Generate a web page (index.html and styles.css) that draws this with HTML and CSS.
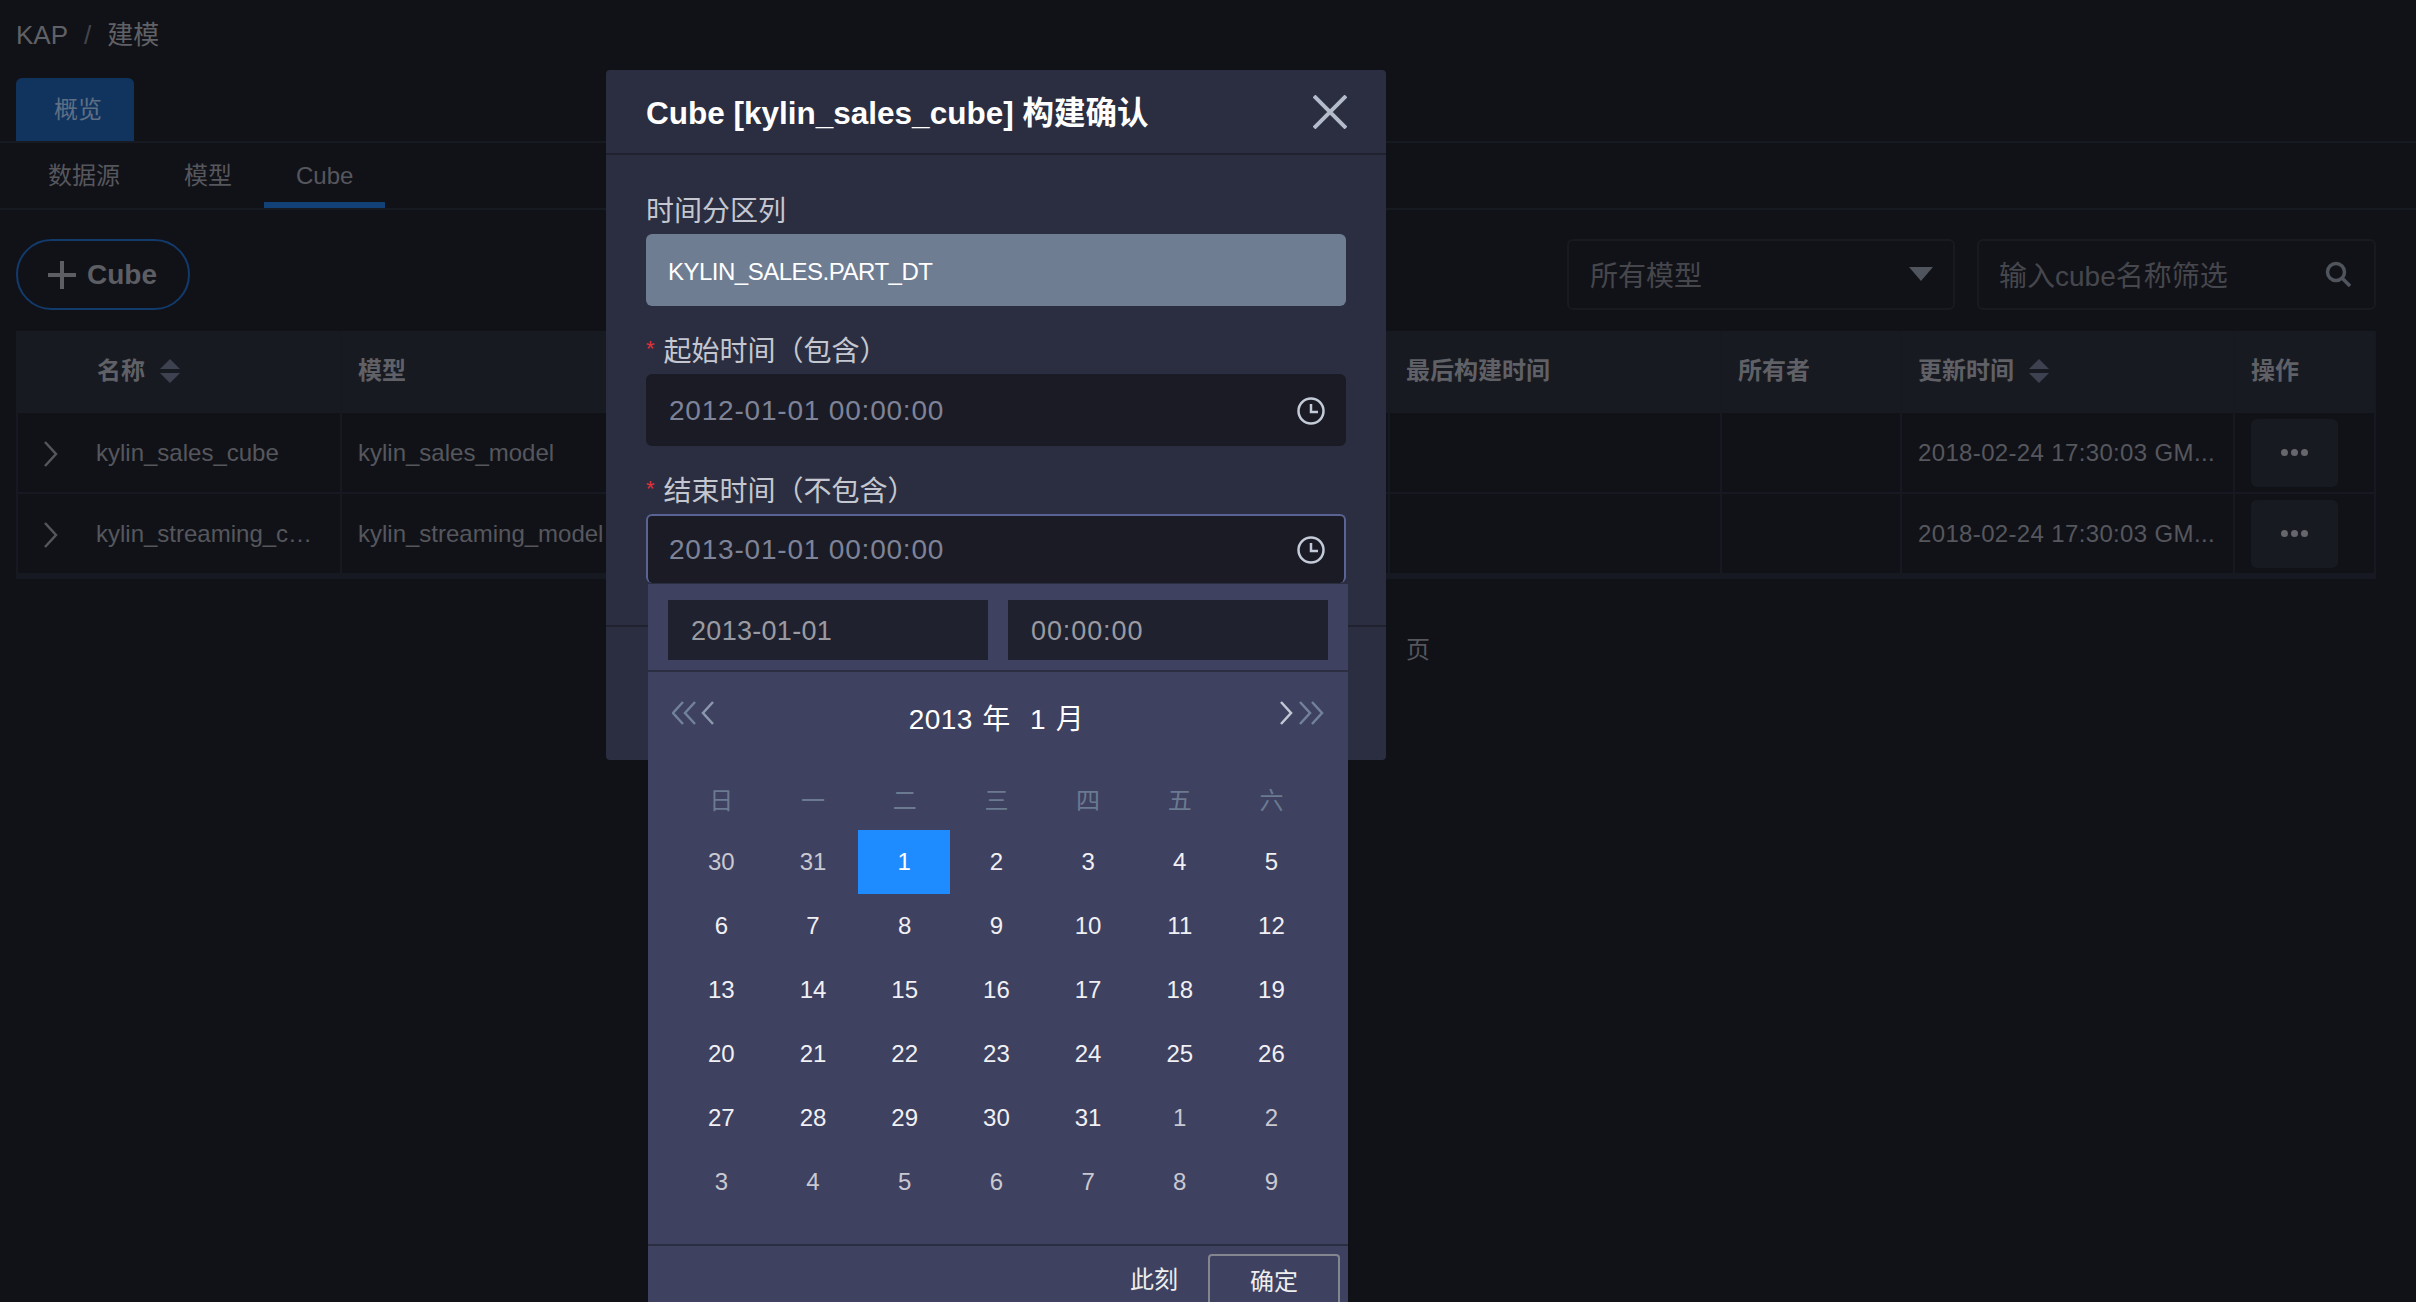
FILE: index.html
```html
<!DOCTYPE html>
<html lang="zh-CN">
<head>
  <meta charset="UTF-8" />
  <title>KAP 建模</title>
  <link rel="stylesheet" href="styles.css">
</head>
<body>
  <div class="page">
    <div class="breadcrumb"><span>KAP</span><span class="crumb-sep">/</span><span>建模</span></div>
    <div class="top-tabs"><div class="top-tab">概览</div></div>
    <div class="sub-tabs">
      <div class="sub-tab">数据源</div>
      <div class="sub-tab">模型</div>
      <div class="sub-tab active">Cube</div>
    </div>
    <div class="toolbar">
      <button class="add-btn">
        <svg width="28" height="28" viewBox="0 0 28 28"><path d="M14 0v28M0 14h28" stroke="#5d5e63" stroke-width="4"/></svg>
        Cube
      </button>
      <div class="filters">
        <div class="select-box">所有模型<svg width="24" height="14" viewBox="0 0 24 14"><path d="M0 0h24L12 14z" fill="#50545c"/></svg></div>
        <div class="search-box">输入cube名称筛选<svg width="28" height="28" viewBox="0 0 28 28" fill="none" stroke="#50545c" stroke-width="3.5"><circle cx="12" cy="12" r="8.5"/><path d="M18 18l8 8"/></svg></div>
      </div>
    </div>

    <div class="table">
      <div class="cell head name-col">名称<svg class="sort" width="20" height="24" viewBox="0 0 20 24"><path d="M10 0l10 10H0zM0 14h20L10 24z" fill="#3e4250"/></svg></div>
      <div class="cell head">模型</div>
      <div class="cell head"></div>
      <div class="cell head">最后构建时间</div>
      <div class="cell head">所有者</div>
      <div class="cell head">更新时间<svg class="sort" width="20" height="24" viewBox="0 0 20 24"><path d="M10 0l10 10H0zM0 14h20L10 24z" fill="#3e4250"/></svg></div>
      <div class="cell head">操作</div>

      <div class="cell name-col"><svg class="chevron" width="14" height="26" viewBox="0 0 14 26" fill="none" stroke="#55565c" stroke-width="2.5"><path d="M1 1l11 12L1 25"/></svg>kylin_sales_cube</div>
      <div class="cell">kylin_sales_model</div>
      <div class="cell"></div>
      <div class="cell"></div>
      <div class="cell"></div>
      <div class="cell date">2018-02-24 17:30:03 GM...</div>
      <div class="cell"><div class="more"><i></i><i></i><i></i></div></div>

      <div class="cell name-col"><svg class="chevron" width="14" height="26" viewBox="0 0 14 26" fill="none" stroke="#55565c" stroke-width="2.5"><path d="M1 1l11 12L1 25"/></svg>kylin_streaming_c…</div>
      <div class="cell">kylin_streaming_model</div>
      <div class="cell"></div>
      <div class="cell"></div>
      <div class="cell"></div>
      <div class="cell date">2018-02-24 17:30:03 GM...</div>
      <div class="cell"><div class="more"><i></i><i></i><i></i></div></div>
    </div>
    <div class="pager">页</div>
  </div>

  <div class="modal">
    <div class="modal-head">
      <span>Cube [kylin_sales_cube] 构建确认</span>
      <svg width="34" height="34" viewBox="0 0 34 34" stroke="#b4bccb" stroke-width="4"><path d="M1 1l32 32M33 1L1 33"/></svg>
    </div>
    <div class="modal-body">
      <div class="label label-first">时间分区列</div>
      <div class="input disabled">KYLIN_SALES.PART_DT</div>
      <div class="label"><em>*</em>起始时间（包含）</div>
      <div class="input">2012-01-01 00:00:00
        <svg class="clock" width="28" height="28" viewBox="0 0 28 28" fill="none" stroke="#c4cbd8" stroke-width="2.5"><circle cx="14" cy="14" r="12.5"/><path d="M14 7v8h7"/></svg>
      </div>
      <div class="label"><em>*</em>结束时间（不包含）</div>
      <div class="input focused">2013-01-01 00:00:00
        <svg class="clock" width="28" height="28" viewBox="0 0 28 28" fill="none" stroke="#c4cbd8" stroke-width="2.5"><circle cx="14" cy="14" r="12.5"/><path d="M14 7v8h7"/></svg>
      </div>
    </div>
    <div class="modal-foot"></div>

    <div class="picker">
      <div class="picker-inputs">
        <div class="picker-input">2013-01-01</div>
        <div class="picker-input time">00:00:00</div>
      </div>
      <div class="picker-head">
        <svg width="42" height="24" viewBox="0 0 42 24" fill="none" stroke="#71829b" stroke-width="2.5"><path d="M11 1L1 12l10 11M23 1L13 12l10 11"/><path d="M41 1L31 12l10 11" stroke="#8b98ad"/></svg>
        <span class="picker-title">2013 年&nbsp;&nbsp;1 月</span>
        <svg width="44" height="24" viewBox="0 0 44 24" fill="none" stroke="#71829b" stroke-width="2.5"><path d="M1 1l10 11L1 23" stroke="#c2c9d5"/><path d="M20 1l10 11-10 11M32 1l10 11-10 11"/></svg>
      </div>
      <div class="days">
        <span class="wd">日</span><span class="wd">一</span><span class="wd">二</span><span class="wd">三</span><span class="wd">四</span><span class="wd">五</span><span class="wd">六</span>
        <span class="off">30</span><span class="off">31</span><span class="sel">1</span><span>2</span><span>3</span><span>4</span><span>5</span>
        <span>6</span><span>7</span><span>8</span><span>9</span><span>10</span><span>11</span><span>12</span>
        <span>13</span><span>14</span><span>15</span><span>16</span><span>17</span><span>18</span><span>19</span>
        <span>20</span><span>21</span><span>22</span><span>23</span><span>24</span><span>25</span><span>26</span>
        <span>27</span><span>28</span><span>29</span><span>30</span><span>31</span><span class="off">1</span><span class="off">2</span>
        <span class="off">3</span><span class="off">4</span><span class="off">5</span><span class="off">6</span><span class="off">7</span><span class="off">8</span><span class="off">9</span>
      </div>
      <div class="picker-foot">
        <span class="now">此刻</span>
        <button class="ok">确定</button>
      </div>
    </div>
  </div>
</body>
</html>
```

FILE: styles.css
```css
* {
  box-sizing: border-box;
}
html, body {
  height: 1302px;
  overflow: hidden;
}
body {
  margin: 0;
  background: #111218;
  color: #56575d;
  font-family: "Liberation Sans", "Noto Sans CJK SC", sans-serif;
  font-size: 24px;
}

/* page behind the dialog */
.breadcrumb {
  height: 78px;
  padding: 16px 0 0 16px;
  font-size: 26px;
  line-height: 38px;
  color: #606166;
}
.crumb-sep {
  margin: 0 16px;
  color: #44454b;
}
.top-tabs {
  height: 65px;
  padding-left: 16px;
  border-bottom: 2px solid #181a21;
}
.top-tab {
  width: 118px;
  height: 63px;
  padding-left: 6px;
  background: #11345f;
  border-radius: 6px 6px 0 0;
  text-align: center;
  line-height: 64px;
  color: #5f6f84;
}
.sub-tabs {
  display: flex;
  height: 67px;
  padding-left: 16px;
  border-bottom: 2px solid #181a21;
}
.sub-tab {
  padding: 0 32px;
  height: 65px;
  line-height: 66px;
  color: #56575d;
}
.sub-tab.active {
  border-bottom: 6px solid #114177;
}
.toolbar {
  display: flex;
  justify-content: space-between;
  padding: 29px 40px 0 16px;
  height: 121px;
}
.add-btn {
  display: flex;
  align-items: center;
  gap: 11px;
  width: 174px;
  height: 71px;
  padding: 0 0 0 30px;
  border: 2px solid #123a6b;
  border-radius: 36px;
  background: none;
  color: #5d5e63;
  font: bold 28px "Liberation Sans", sans-serif;
}
.filters {
  display: flex;
  gap: 22px;
}
.select-box, .search-box {
  display: flex;
  align-items: center;
  justify-content: space-between;
  height: 71px;
  padding: 0 20px 2px;
  border: 2px solid #181a21;
  border-radius: 6px;
  font-size: 28px;
  color: #46474d;
}
.select-box {
  width: 388px;
  margin-left: -2px;
  padding-left: 21px;
}
.search-box {
  width: 399px;
  padding-right: 22px;
}

.table {
  display: grid;
  grid-template-columns: 326px 370px 678px 332px 180px 333px 141px;
  grid-template-rows: 82px 81px 81px;
  margin-left: 16px;
  width: 2360px;
  border-bottom: 4px solid #171922;
}
.cell {
  display: flex;
  align-items: center;
  padding-left: 16px;
  border-right: 2px solid #171922;
  border-bottom: 2px solid #171922;
  white-space: nowrap;
  overflow: hidden;
}
.head {
  padding-bottom: 8px;
  background: #181a22;
  font-weight: bold;
  color: #606166;
  border-bottom: none;
}
.name-col {
  position: relative;
  padding-left: 78px;
  border-left: 2px solid #171922;
}
.head.name-col {
  padding-left: 81px;
  border-left: none;
}
.chevron {
  position: absolute;
  left: 26px;
  top: 28px;
}
.sort {
  margin-left: 15px;
  margin-top: 5px;
}
.date {
  letter-spacing: 0.35px;
}
.more {
  display: flex;
  align-items: center;
  justify-content: center;
  gap: 3px;
  width: 87px;
  height: 68px;
  background: #181a22;
  border-radius: 6px;
}
.more i {
  width: 7px;
  height: 7px;
  border-radius: 50%;
  background: #66676c;
}
.pager {
  margin: 51px 0 0 1406px;
}

/* dialog */
.modal {
  position: absolute;
  left: 606px;
  top: 70px;
  width: 780px;
  height: 690px;
  background: #2b2e40;
  border-radius: 4px;
}
.modal-head {
  display: flex;
  align-items: center;
  justify-content: space-between;
  height: 85px;
  padding: 0 39px 0 40px;
  border-bottom: 2px solid #202230;
  color: #fff;
  font-size: 31.5px;
  font-weight: bold;
}
.modal-head span {
  margin-top: -4px;
}
.modal-body {
  height: 472px;
  padding: 0 40px;
  border-bottom: 2px solid #202230;
}
.label {
  height: 68px;
  padding-top: 23px;
  font-size: 28px;
  line-height: 40px;
  color: #c4c7d0;
}
.label-first {
  height: 79px;
  padding-top: 37px;
}
.label em {
  margin-right: 9px;
  color: #e5303a;
  font-style: normal;
  font-size: 22px;
  vertical-align: 5px;
}
.input {
  display: flex;
  align-items: center;
  justify-content: space-between;
  height: 72px;
  padding: 1px 21px 0 23px;
  border-radius: 6px;
  background: #1a1b25;
  font-size: 28px;
  letter-spacing: 0.8px;
  color: #7f8398;
}
.input.disabled {
  padding-left: 22px;
  padding-top: 3px;
  background: #6f7d93;
  color: #fff;
  font-size: 24px;
  letter-spacing: -0.5px;
}
.input.focused {
  height: 69px;
  border: 2px solid #5a6494;
  border-bottom: none;
  padding: 0 19px 0 21px;
}
.clock {
  flex: none;
}

/* date picker dropdown */
.picker {
  position: absolute;
  left: 42px;
  top: 514px;
  width: 700px;
  height: 740px;
  background: #3f4160;
}
.picker-inputs {
  display: flex;
  gap: 20px;
  height: 88px;
  padding: 16px 20px 0;
  border-bottom: 2px solid #2b2e40;
}
.picker-input {
  width: 320px;
  height: 60px;
  padding-left: 23px;
  background: #20212e;
  line-height: 62px;
  font-size: 27px;
  letter-spacing: 0.3px;
  color: #9a9ba2;
}
.picker-input.time {
  letter-spacing: 0.9px;
}
.picker-head {
  display: flex;
  align-items: center;
  justify-content: space-between;
  height: 96px;
  padding: 0 24px;
}
.picker-head svg {
  margin-top: -14px;
}
.picker-title {
  margin: -6px 0 0 -1px;
  font-size: 28px;
  letter-spacing: 0.4px;
  word-spacing: 1.5px;
  color: #fff;
}
.days {
  display: grid;
  grid-template-columns: repeat(7, 91.7px);
  grid-template-rows: 62px repeat(6, 64px);
  margin-left: 27px;
  color: #f0f0f4;
}
.days span {
  display: flex;
  align-items: center;
  justify-content: center;
  padding-left: 1px;
}
.days .wd {
  padding-bottom: 2px;
  color: #6b7a90;
}
.days .off {
  color: #c9c9d2;
}
.days .sel {
  padding-left: 0;
  background: #1e8cff;
  color: #fff;
}
.picker-foot {
  display: flex;
  align-items: flex-start;
  justify-content: flex-end;
  gap: 30px;
  margin-top: 30px;
  padding: 8px 8px 0 0;
  border-top: 2px solid #2b2e40;
}
.now {
  margin-top: 6px;
  color: #eee;
}
.ok {
  width: 132px;
  height: 60px;
  padding: 0 0 10px;
  border: 2px solid #84868f;
  border-radius: 4px;
  background: none;
  color: #eee;
  font: 24px "Liberation Sans", "Noto Sans CJK SC", sans-serif;
}
```
